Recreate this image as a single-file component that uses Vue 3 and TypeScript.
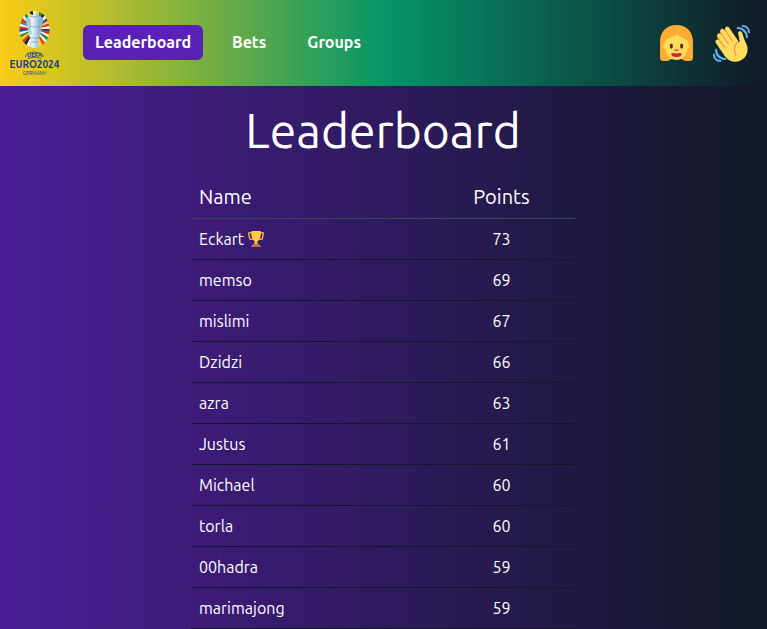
<script setup lang="ts">
interface Player {
  name: string
  points: number
}

const navItems: { label: string; active: boolean }[] = [
  { label: 'Leaderboard', active: true },
  { label: 'Bets', active: false },
  { label: 'Groups', active: false },
]

const players: Player[] = [
  { name: 'Eckart', points: 73 },
  { name: 'memso', points: 69 },
  { name: 'mislimi', points: 67 },
  { name: 'Dzidzi', points: 66 },
  { name: 'azra', points: 63 },
  { name: 'Justus', points: 61 },
  { name: 'Michael', points: 60 },
  { name: 'torla', points: 60 },
  { name: '00hadra', points: 59 },
  { name: 'marimajong', points: 59 },
]

// Flag-coloured rays of the logo, clockwise from the top.
const rayColors: string[] = [
  '#f8f8f0', '#ffd21c', '#12905a', '#1c2430', '#f4f6f4', '#2a52b8', '#ffd21c', '#e02a2c',
  '#f4f6f4', '#1f3f94', '#e02a2c', '#f4f6f4', '#0f8a52', '#f4f6f4', '#e8402c', '#ffd21c',
  '#f4f6f4', '#f4f6f4', '#0f8a52', '#f4f6f4', '#1c2430', '#e02a2c', '#ffd21c', '#12905a',
  '#f4f6f4', '#2450a8', '#e02a2c', '#f4f6f4', '#3f7fd0', '#e02a2c', '#f4f6f4', '#12905a',
  '#ffd21c', '#1c2430',
]

const rays = rayColors.map((color, i) => {
  const step = (Math.PI * 2) / rayColors.length
  const point = (a: number): string =>
    `${(24.5 + 24 * Math.sin(a)).toFixed(2)} ${(19 - 24 * Math.cos(a)).toFixed(2)}`
  return { color, d: `M24.5 19L${point((i - 0.5) * step)}L${point((i + 0.5) * step)}Z` }
})
</script>

<template>
  <div class="page">
    <header class="topbar">
      <a class="logo" href="#" aria-label="UEFA EURO2024 Germany">
        <svg width="50" height="64" viewBox="0 0 50 64" aria-hidden="true">
          <defs>
            <clipPath id="oval"><ellipse cx="24.500" cy="19.500" rx="15" ry="18.500" /></clipPath>
            <linearGradient id="silver">
              <stop offset="0" stop-color="#8db4cf" />
              <stop offset=".35" stop-color="#eef7fb" />
              <stop offset=".6" stop-color="#b4d2e2" />
              <stop offset="1" stop-color="#7ba6c4" />
            </linearGradient>
          </defs>
          <g clip-path="url(#oval)">
            <path v-for="(ray, i) in rays" :key="i" :d="ray.d" :fill="ray.color" />
            <path
              d="M20 4Q24.500 6 29 4L29 6Q33 6 33 11Q33 15 31 18Q31.500 24 29 28L28 32L30 39H19L21 32L20 28Q17.500 24 18 18Q16 15 16 11Q16 6 20 6Z"
              fill="url(#silver)"
            />
            <path
              d="M20 6Q24 8 29 6M18 10Q20 8 20 13Q19 18 21 24M31 10Q29 8 29 13Q30 18 28 24M20 16Q24.500 18 29 16M20 28H29M21 32H28"
              fill="none"
              stroke="#6f9fbe"
              stroke-width=".7"
            />
          </g>
          <path
            d="M15.500 47Q15.500 44 19 43Q24.500 41 30 43Q33.500 44 33.500 47M17.500 48.500Q24.500 45.500 31.500 48.500"
            fill="none"
            stroke="#2a4a8c"
            stroke-width=".8"
          />
          <text class="logo-uefa" x="24.500" y="47">UEFA</text>
          <text class="logo-euro" x="24.500" y="58">EURO2024</text>
          <text class="logo-country" x="24.500" y="65">GERMANY</text>
        </svg>
      </a>

      <nav class="nav" aria-label="Main">
        <a
          v-for="item in navItems"
          :key="item.label"
          href="#"
          class="nav-link"
          :class="{ active: item.active }"
          :aria-current="item.active ? 'page' : undefined"
          >{{ item.label }}</a
        >
      </nav>

      <div class="actions">
        <button type="button" class="icon-button" aria-label="Profile">
          <svg viewBox="0 0 36 36" aria-hidden="true">
            <path fill="#ffac33" d="M18 0C8 0 2 7 2 16v15c0 2 .3 3 1 3.500 4 1.200 8 .5 10-1.500h10c2 2 6 2.700 10 1.500.7-.5 1-1.500 1-3.500V16C34 7 28 0 18 0z" />
            <path fill="#ffdc5d" d="M6.500 18c0-2 1-3.500 3-4.500 5-2.500 7-2.500 9-4.500 2 2.500 5 3 8 4.500 2 1 3 2.500 3 4.500 0 3-.4 6-1.500 8.500C26.500 31 22.500 34 18 34S9.500 31 8 26.500C6.900 24 6.500 21 6.500 18z" />
            <path fill="#ffdc5d" d="M6.500 18c-1.800 0-1.800 5 0 5zM29.500 18c1.800 0 1.800 5 0 5z" />
            <ellipse cx="13" cy="20.500" rx="1.500" ry="2.500" fill="#662113" />
            <ellipse cx="23" cy="20.500" rx="1.500" ry="2.500" fill="#662113" />
            <path fill="none" stroke="#c1694f" stroke-width="1.700" stroke-linecap="round" d="M16.700 24.500h2.600" />
            <path fill="#df1f32" d="M13 27.500q2.500-.8 5 .2 2.500-1 5-.2.8 3.500-5 3.700Q12.200 31 13 27.500z" />
          </svg>
        </button>
        <button type="button" class="icon-button" aria-label="Sign out">
          <svg viewBox="0 0 36 36" aria-hidden="true">
            <path fill="#EF9645" d="M4.861 9.147c.94-.657 2.357-.531 3.201.166l-.968-1.407c-.779-1.111-.5-2.313.612-3.093 1.112-.777 4.263 1.312 4.263 1.312-.786-1.122-.639-2.544.483-3.331 1.122-.784 2.670-.513 3.456.611l10.292 14.720L25 31l-11.083-4.042L4.250 12.625c-.793-1.129-.519-2.686.611-3.478z" />
            <path fill="#FFDC5D" d="M2.695 17.336s-1.132-1.650.519-2.781c1.649-1.131 2.780.518 2.780.518l5.251 7.658c.181-.302.379-.6.6-.894L4.557 11.210s-1.131-1.649.519-2.780c1.649-1.131 2.780.518 2.780.518l6.855 9.997c.255-.208.516-.417.785-.622L7.549 6.732s-1.131-1.649.519-2.780c1.649-1.131 2.780.518 2.780.518l7.947 11.589c.292-.179.581-.334.871-.498L12.238 4.729s-1.131-1.649.518-2.780c1.649-1.131 2.780.518 2.780.518l7.854 11.454 1.194 1.742c-4.948 3.394-5.419 9.779-2.592 13.902.565.825 1.390.26 1.390.26-3.393-4.949-2.357-10.510 2.592-13.903L24.515 8.620s-.545-1.924 1.378-2.470c1.924-.545 2.470 1.379 2.470 1.379l1.685 5.004c.668 1.984 1.379 3.961 2.320 5.831 2.657 5.280 1.070 11.842-3.940 15.279-5.465 3.747-12.936 2.354-16.684-3.110L2.695 17.336z" />
            <g fill="#5DADEC">
              <path d="M12 32.042C8 32.042 3.958 28 3.958 24c0-.553-.405-1-.958-1s-1.042.447-1.042 1C1.958 30 6 34.042 12 34.042c.553 0 1-.489 1-1.042s-.447-.958-1-.958z" />
              <path d="M7 34c-3 0-5-2-5-5 0-.553-.447-1-1-1s-1 .447-1 1c0 4 3 7 7 7 .553 0 1-.447 1-1s-.447-1-1-1zM24 2c-.552 0-1 .448-1 1s.448 1 1 1c4 0 8 3.589 8 8 0 .552.448 1 1 1s1-.448 1-1c0-5.514-4-10-10-10z" />
              <path d="M29 .042c-.552 0-1 .406-1 .958s.448 1.042 1 1.042c3 0 4.958 2.225 4.958 4.958 0 .552.489 1 1.042 1s.958-.448.958-1C35.958 3.163 33 .042 29 .042z" />
            </g>
          </svg>
        </button>
      </div>
    </header>

    <main class="content">
      <h1 class="title">Leaderboard</h1>
      <table class="board">
        <thead>
          <tr>
            <th scope="col" class="name">Name</th>
            <th scope="col" class="points">Points</th>
          </tr>
        </thead>
        <tbody>
          <tr v-for="(player, i) in players" :key="player.name">
            <td class="name">
              {{ player.name }}
              <svg v-if="i === 0" class="trophy" viewBox="0 0 36 36" role="img" aria-label="Leader">
                <path fill="#FFAC33" d="M5.123 5h6C12.227 5 13 4.896 13 6V4c0-1.104-.773-2-1.877-2h-8c-2 0-3.583 2.125-3 5 0 0 1.791 9.375 1.917 9.958C2.373 18.500 4.164 20 6.081 20h6.958c1.105 0-.039-1.896-.039-3v-2c0 1.104-.773 2-1.877 2h-4c-1.104 0-1.833-1.042-2-2S3.539 7.667 3.539 7.667C3.206 5.750 4.018 5 5.123 5zm25.812 0h-6C23.831 5 22 4.896 22 6V4c0-1.104 1.831-2 2.935-2h8c2 0 3.584 2.125 3 5 0 0-1.633 9.419-1.771 10-.354 1.500-2.042 3-4 3h-7.146C21.914 20 22 18.104 22 17v-2c0 1.104 1.831 2 2.935 2h4c1.104 0 1.834-1.042 2-2s1.584-7.333 1.584-7.333C32.851 5.750 32.040 5 30.935 5zM20.832 22c0-6.958-2.709 0-2.709 0s-3-6.958-3 0-3.291 10-3.291 10h12.292c-.001 0-3.292-3.042-3.292-10z" />
                <path fill="#FFCC4D" d="M29.123 6.577c0 6.775-6.770 18.423-11 18.423-4.231 0-11-11.649-11-18.423V2c0-1.200.8-2 2-2h18c1.200 0 2 .8 2 2z" />
                <path fill="#C1694F" d="M27 33c0 1.104.227 2-.877 2h-16C9.018 35 9 34.104 9 33v-1c0-1.104 1.164-2 2.206-2h13.917c1.042 0 1.877.896 1.877 2v1z" />
                <path fill="#C1694F" d="M29 34.625c0 .760.165 1.375-1.252 1.375H8.498C7.206 36 7 35.385 7 34.625v-.25C7 33.615 7.738 33 8.498 33h19.250c.759 0 1.252.615 1.252 1.375v.250z" />
              </svg>
            </td>
            <td class="points">{{ player.points }}</td>
          </tr>
        </tbody>
      </table>
    </main>
  </div>
</template>

<style>
body {
  margin: 0;
  background: #111827;
}
</style>

<style scoped>
.page {
  min-height: 100vh;
  color: #fff;
  font: 16px/24px Ubuntu, "Noto Sans", sans-serif;
  background: linear-gradient(to right, #4c1d95, #111827);
}

.topbar {
  display: flex;
  align-items: center;
  padding: 10px 17px 12px 10px;
  background: linear-gradient(to right, #facc15, #059669, #111827);
}

.logo,
.logo svg {
  display: block;
  overflow: visible;
}

.logo text {
  fill: #173c9b;
  text-anchor: middle;
  font-family: Ubuntu, "Noto Sans", sans-serif;
}

.logo .logo-uefa {
  font-size: 6px;
  font-weight: 700;
}

.logo .logo-euro {
  font-size: 10px;
  font-weight: 700;
}

.logo .logo-country {
  font-size: 5px;
}

.nav {
  display: flex;
  gap: 17px;
  margin-left: 23px;
}

.nav-link {
  padding: 5px 12px 6px;
  border-radius: 6px;
  color: #fff;
  font-size: 16px;
  font-weight: 700;
  text-decoration: none;
}

.nav-link.active {
  background: #5b21b6;
}

.actions {
  display: flex;
  gap: 18px;
  margin-left: auto;
  padding-top: 2px;
}

.icon-button {
  width: 37px;
  height: 37px;
  padding: 0;
  border: 0;
  background: none;
  cursor: pointer;
}

.icon-button svg {
  display: block;
  width: 100%;
  height: 100%;
}

.content {
  display: flex;
  flex-direction: column;
  align-items: center;
  gap: 20px;
  padding: 20px 1px 0 0;
}

.title {
  margin: 0;
  font-size: 48px;
  font-weight: 400;
  line-height: 48px;
}

.board {
  width: 384px;
  max-width: 100%;
  table-layout: fixed;
  border-spacing: 0;
}

.board th,
.board td {
  padding: 8px;
  border-bottom: 1px solid #111827;
  text-align: left;
  font-weight: 400;
}

.board th {
  padding: 9px 8px 7px;
  border-color: #334b55;
  font-size: 20px;
  line-height: 28px;
}

.board .points {
  width: 131px;
  text-align: center;
}

.trophy {
  display: inline-block;
  width: 16px;
  height: 16px;
  vertical-align: -2px;
}
</style>
